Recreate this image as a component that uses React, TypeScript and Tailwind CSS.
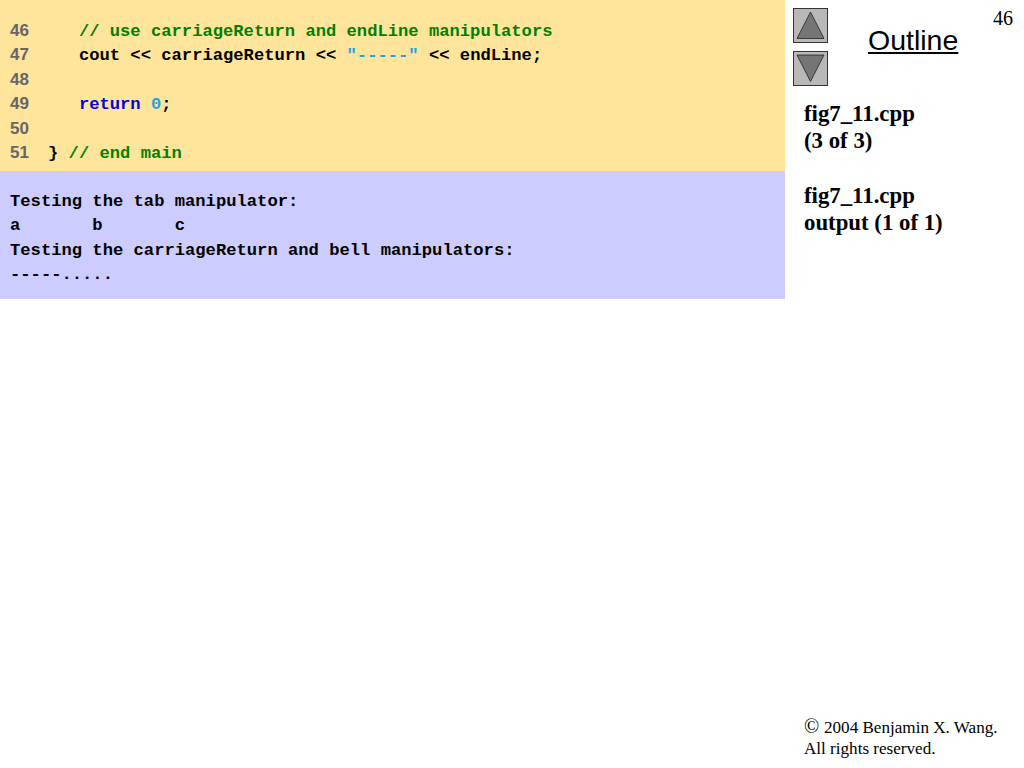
import React from 'react';

const mono = "font-['Liberation_Mono',monospace]";
const serif = "font-['Liberation_Serif',serif]";

function Code({ num, children }: { num: number; children?: React.ReactNode }) {
  return (
    <div className="flex h-[24.5px] items-center">
      <span className="w-[38px] pb-[2px] font-['Liberation_Sans',sans-serif] text-[17px] font-bold text-[#666666]">{num}</span>
      <span className="whitespace-pre">{children}</span>
    </div>
  );
}

function NavButton({ down }: { down?: boolean }) {
  return (
    <div className="h-[35px] w-[35px] border border-[#333333] bg-[#b8b8b8]">
      <svg viewBox="0 0 33 33" className="h-full w-full">
        <polygon
          points={down ? '3,3 30,3 16.5,29.5' : '3,29.5 30,29.5 16.5,3'}
          fill="#757575"
          stroke="#222222"
          strokeWidth="0.8"
        />
      </svg>
    </div>
  );
}

export default function App() {
  return (
    <div className="flex h-[768px] w-[1024px] bg-white">
      <div className={`w-[785px] text-[17.16px] font-bold leading-[24.5px] text-black ${mono}`}>
        <div className="h-[171px] bg-[#ffe49c] pl-[10px] pt-[19.5px]">
          <Code num={46}>
            {'   '}
            <span className="text-[#008000]">// use carriageReturn and endLine manipulators</span>
          </Code>
          <Code num={47}>
            {'   cout << carriageReturn << '}
            <span className="text-[#2a9fe0]">"-----"</span>
            {' << endLine;'}
          </Code>
          <Code num={48} />
          <Code num={49}>
            {'   '}
            <span className="text-[#0000e0]">return</span> <span className="text-[#2a9fe0]">0</span>;
          </Code>
          <Code num={50} />
          <Code num={51}>
            {'} '}
            <span className="text-[#008000]">// end main</span>
          </Code>
        </div>
        <div className="h-[128px] whitespace-pre bg-[#ccccff] pl-[10px] pt-[18.5px]">
          <div>Testing the tab manipulator:</div>
          <div>{'a       b       c'}</div>
          <div>Testing the carriageReturn and bell manipulators:</div>
          <div>-----.....</div>
        </div>
      </div>

      <div className={`flex flex-1 flex-col pb-[9px] text-black ${serif}`}>
        <div className="flex pl-[8px] pr-[11px] pt-[8px]">
          <div className="flex flex-col gap-[8px]">
            <NavButton />
            <NavButton down />
          </div>
          <div className="ml-[40px] mt-[15px] font-['Liberation_Sans',sans-serif] text-[28.5px] leading-[34px] underline">Outline</div>
          <div className="ml-auto mt-[-1px] text-[20px] leading-[22px]">46</div>
        </div>
        <div className="mt-[14px] pl-[19px] text-[22.8px] font-bold leading-[27.3px]">
          <div>fig7_11.cpp</div>
          <div>(3 of 3)</div>
          <div className="mt-[27.3px]">fig7_11.cpp</div>
          <div>output (1 of 1)</div>
        </div>
        <div className="mt-auto pl-[19px] text-[17.1px] leading-[21px]">
          <div>
            <span className="inline-block w-[20px] text-[20px] leading-[21px]">©</span>2004 Benjamin X. Wang.
          </div>
          <div>All rights reserved.</div>
        </div>
      </div>
    </div>
  );
}
